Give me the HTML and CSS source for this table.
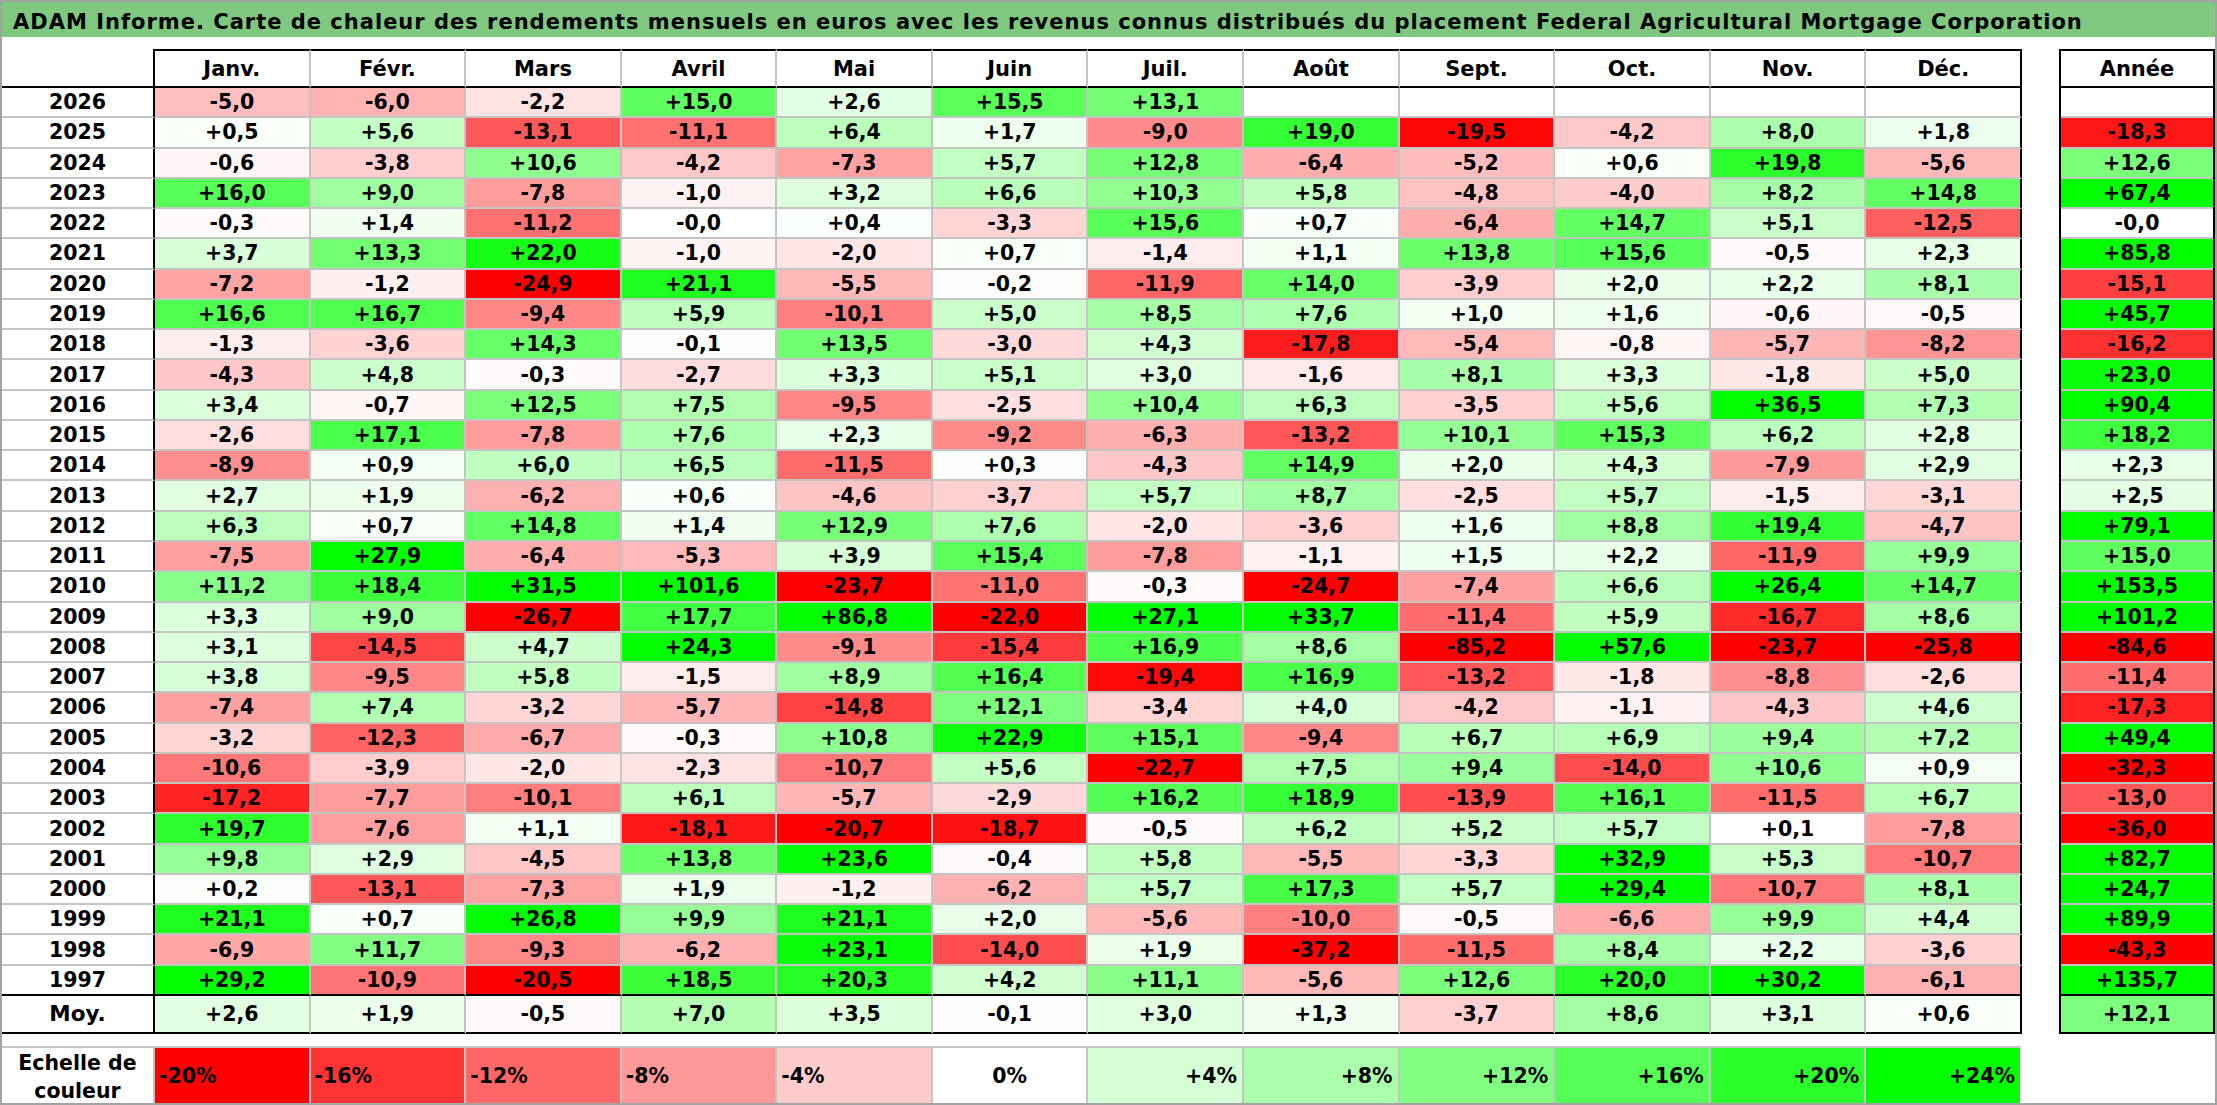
FILE: index.html
```html
<!DOCTYPE html>
<html lang="fr">
<head>
<meta charset="utf-8">
<title>ADAM Informe</title>
<link rel="stylesheet" href="styles.css">
</head>
<body>
<div class="page">
  <div class="title">ADAM Informe. Carte de chaleur des rendements mensuels en euros avec les revenus connus distribués du placement Federal Agricultural Mortgage Corporation</div>
  <div class="main">
    <div class="heat">
      <div class="row head-row">
        <div class="cell label"></div>
        <div class="cell">Janv.</div>
        <div class="cell">Févr.</div>
        <div class="cell">Mars</div>
        <div class="cell">Avril</div>
        <div class="cell">Mai</div>
        <div class="cell">Juin</div>
        <div class="cell">Juil.</div>
        <div class="cell">Août</div>
        <div class="cell">Sept.</div>
        <div class="cell">Oct.</div>
        <div class="cell">Nov.</div>
        <div class="cell">Déc.</div>
      </div>
      <div class="rows" id="rows"></div>
      <div class="row moy-row" id="moy"></div>
    </div>
    <div class="annee">
      <div class="a-cell a-head">Année</div>
      <div class="a-rows" id="arows"></div>
      <div class="a-cell a-moy" id="amoy"></div>
    </div>
  </div>
  <div class="row scale">
    <div class="cell label scale-label">Echelle de<br>couleur</div>
    <div class="cell neg s-20">-20%</div>
    <div class="cell neg s-16">-16%</div>
    <div class="cell neg s-12">-12%</div>
    <div class="cell neg s-8">-8%</div>
    <div class="cell neg s-4">-4%</div>
    <div class="cell s0">0%</div>
    <div class="cell pos s4">+4%</div>
    <div class="cell pos s8">+8%</div>
    <div class="cell pos s12">+12%</div>
    <div class="cell pos s16">+16%</div>
    <div class="cell pos s20">+20%</div>
    <div class="cell pos s24">+24%</div>
  </div>
</div>
<script src="script.js"></script>
</body>
</html>
```

FILE: styles.css
```css
* { box-sizing: border-box; }

body {
  margin: 0;
  background: #ffffff;
  font-family: "DejaVu Sans", "Liberation Sans", sans-serif;
  font-weight: bold;
  color: #000000;
}

.page {
  width: 2217px;
  height: 1105px;
  border: 2px solid #a3a3a3;
  overflow: hidden;
}

.title {
  height: 35px;
  background: #7fc87f;
  font-size: 21px;
  letter-spacing: 1px;
  line-height: 29px;
  padding: 6px 0 0 11px;
  white-space: nowrap;
}

.main {
  display: flex;
  margin-top: 12px;
  margin-left: -2px;
}

.heat { width: 2022px; }

.row {
  display: grid;
  grid-template-columns: 155px repeat(12, 1fr);
}

.cell {
  display: flex;
  align-items: center;
  justify-content: center;
  font-size: 20.5px;
  white-space: nowrap;
  border-right: 2px solid #c4c4c4;
  border-bottom: 2px solid #c4c4c4;
  background: #ffffff;
}

.row .cell:last-child { border-right-color: #000000; }

.label {
  border-left: 2px solid #000000;
  border-right: 2px solid #000000;
}

/* header */
.head-row { height: 39px; }
.head-row .cell {
  font-size: 21px;
  border-top: 2px solid #000000;
  border-bottom: 2px solid #000000;
}
.head-row .label {
  border-top: none;
  border-left-color: #a3a3a3;
}

/* data rows */
.data-row { height: 30.27px; }
.data-row.last .cell { border-bottom-color: #000000; }

/* average row */
.moy-row { height: 38px; }
.moy-row .cell { border-bottom-color: #000000; }
.moy-row .label { font-size: 21.5px; }

/* year column */
.annee {
  width: 156px;
  margin-left: 37px;
  border: 2px solid #000000;
  display: flex;
  flex-direction: column;
}
.a-cell {
  display: flex;
  align-items: center;
  justify-content: center;
  font-size: 20.5px;
  border-bottom: 2px solid #c4c4c4;
  background: #ffffff;
}
.a-head { height: 37px; font-size: 21px; border-bottom-color: #000000; }
.a-rows .a-cell { height: 30.27px; }
.a-rows .a-cell.last { border-bottom-color: #000000; }
.a-moy { height: 36px; border-bottom: none; }

/* colour scale */
.scale {
  width: 2022px;
  height: 57px;
  margin-top: 12px;
  margin-left: -2px;
}
.scale .cell {
  border-top: 2px solid #c4c4c4;
  border-bottom: none;
  border-right-color: #c4c4c4;
}
.scale .cell:last-child { border-right-color: #ffffff; }
.scale .label {
  border-left-color: #a3a3a3;
  border-right-color: #c4c4c4;
}
.scale-label {
  line-height: 28px;
  text-align: center;
  display: block;
  padding-top: 1px;
}
.scale .neg { justify-content: flex-start; padding-left: 4px; }
.scale .pos { justify-content: flex-end; padding-right: 5px; }

.s-20 { background: #ff0000; }
.s-16 { background: #ff3333; }
.s-12 { background: #ff6666; }
.s-8 { background: #ff9999; }
.s-4 { background: #ffcccc; }
.s0 { background: #ffffff; }
.s4 { background: #d4ffd4; }
.s8 { background: #aaffaa; }
.s12 { background: #80ff80; }
.s16 { background: #55ff55; }
.s20 { background: #2bff2b; }
.s24 { background: #00ff00; }
```

FILE: script.js
```js
var DATA = [
"2026 -5,0 -6,0 -2,2 +15,0 +2,6 +15,5 +13,1 _ _ _ _ _ _",
"2025 +0,5 +5,6 -13,1 -11,1 +6,4 +1,7 -9,0 +19,0 -19,5 -4,2 +8,0 +1,8 -18,3",
"2024 -0,6 -3,8 +10,6 -4,2 -7,3 +5,7 +12,8 -6,4 -5,2 +0,6 +19,8 -5,6 +12,6",
"2023 +16,0 +9,0 -7,8 -1,0 +3,2 +6,6 +10,3 +5,8 -4,8 -4,0 +8,2 +14,8 +67,4",
"2022 -0,3 +1,4 -11,2 -0,0 +0,4 -3,3 +15,6 +0,7 -6,4 +14,7 +5,1 -12,5 -0,0",
"2021 +3,7 +13,3 +22,0 -1,0 -2,0 +0,7 -1,4 +1,1 +13,8 +15,6 -0,5 +2,3 +85,8",
"2020 -7,2 -1,2 -24,9 +21,1 -5,5 -0,2 -11,9 +14,0 -3,9 +2,0 +2,2 +8,1 -15,1",
"2019 +16,6 +16,7 -9,4 +5,9 -10,1 +5,0 +8,5 +7,6 +1,0 +1,6 -0,6 -0,5 +45,7",
"2018 -1,3 -3,6 +14,3 -0,1 +13,5 -3,0 +4,3 -17,8 -5,4 -0,8 -5,7 -8,2 -16,2",
"2017 -4,3 +4,8 -0,3 -2,7 +3,3 +5,1 +3,0 -1,6 +8,1 +3,3 -1,8 +5,0 +23,0",
"2016 +3,4 -0,7 +12,5 +7,5 -9,5 -2,5 +10,4 +6,3 -3,5 +5,6 +36,5 +7,3 +90,4",
"2015 -2,6 +17,1 -7,8 +7,6 +2,3 -9,2 -6,3 -13,2 +10,1 +15,3 +6,2 +2,8 +18,2",
"2014 -8,9 +0,9 +6,0 +6,5 -11,5 +0,3 -4,3 +14,9 +2,0 +4,3 -7,9 +2,9 +2,3",
"2013 +2,7 +1,9 -6,2 +0,6 -4,6 -3,7 +5,7 +8,7 -2,5 +5,7 -1,5 -3,1 +2,5",
"2012 +6,3 +0,7 +14,8 +1,4 +12,9 +7,6 -2,0 -3,6 +1,6 +8,8 +19,4 -4,7 +79,1",
"2011 -7,5 +27,9 -6,4 -5,3 +3,9 +15,4 -7,8 -1,1 +1,5 +2,2 -11,9 +9,9 +15,0",
"2010 +11,2 +18,4 +31,5 +101,6 -23,7 -11,0 -0,3 -24,7 -7,4 +6,6 +26,4 +14,7 +153,5",
"2009 +3,3 +9,0 -26,7 +17,7 +86,8 -22,0 +27,1 +33,7 -11,4 +5,9 -16,7 +8,6 +101,2",
"2008 +3,1 -14,5 +4,7 +24,3 -9,1 -15,4 +16,9 +8,6 -85,2 +57,6 -23,7 -25,8 -84,6",
"2007 +3,8 -9,5 +5,8 -1,5 +8,9 +16,4 -19,4 +16,9 -13,2 -1,8 -8,8 -2,6 -11,4",
"2006 -7,4 +7,4 -3,2 -5,7 -14,8 +12,1 -3,4 +4,0 -4,2 -1,1 -4,3 +4,6 -17,3",
"2005 -3,2 -12,3 -6,7 -0,3 +10,8 +22,9 +15,1 -9,4 +6,7 +6,9 +9,4 +7,2 +49,4",
"2004 -10,6 -3,9 -2,0 -2,3 -10,7 +5,6 -22,7 +7,5 +9,4 -14,0 +10,6 +0,9 -32,3",
"2003 -17,2 -7,7 -10,1 +6,1 -5,7 -2,9 +16,2 +18,9 -13,9 +16,1 -11,5 +6,7 -13,0",
"2002 +19,7 -7,6 +1,1 -18,1 -20,7 -18,7 -0,5 +6,2 +5,2 +5,7 +0,1 -7,8 -36,0",
"2001 +9,8 +2,9 -4,5 +13,8 +23,6 -0,4 +5,8 -5,5 -3,3 +32,9 +5,3 -10,7 +82,7",
"2000 +0,2 -13,1 -7,3 +1,9 -1,2 -6,2 +5,7 +17,3 +5,7 +29,4 -10,7 +8,1 +24,7",
"1999 +21,1 +0,7 +26,8 +9,9 +21,1 +2,0 -5,6 -10,0 -0,5 -6,6 +9,9 +4,4 +89,9",
"1998 -6,9 +11,7 -9,3 -6,2 +23,1 -14,0 +1,9 -37,2 -11,5 +8,4 +2,2 -3,6 -43,3",
"1997 +29,2 -10,9 -20,5 +18,5 +20,3 +4,2 +11,1 -5,6 +12,6 +20,0 +30,2 -6,1 +135,7"
];
var MOY = "Moy. +2,6 +1,9 -0,5 +7,0 +3,5 -0,1 +3,0 +1,3 -3,7 +8,6 +3,1 +0,6 +12,1";

function colour(txt) {
  if (txt === "_") return "#ffffff";
  var v = parseFloat(txt.replace(",", "."));
  var c;
  if (v >= 0) {
    c = Math.round(255 * (1 - Math.min(v, 24) / 24));
    return "rgb(" + c + ",255," + c + ")";
  }
  c = Math.round(255 * (1 - Math.min(-v, 20) / 20));
  return "rgb(255," + c + "," + c + ")";
}

function cell(cls, txt) {
  var d = document.createElement("div");
  d.className = cls;
  if (txt !== "_") d.textContent = txt;
  return d;
}

var rows = document.getElementById("rows");
var arows = document.getElementById("arows");

DATA.forEach(function (line, i) {
  var t = line.split(" ");
  var last = i === DATA.length - 1;
  var r = document.createElement("div");
  r.className = "row data-row" + (last ? " last" : "");
  r.appendChild(cell("cell label", t[0]));
  for (var m = 1; m <= 12; m++) {
    var c = cell("cell", t[m]);
    c.style.background = colour(t[m]);
    r.appendChild(c);
  }
  rows.appendChild(r);
  var a = cell("a-cell" + (last ? " last" : ""), t[13]);
  a.style.background = colour(t[13]);
  arows.appendChild(a);
});

var mt = MOY.split(" ");
var moy = document.getElementById("moy");
moy.appendChild(cell("cell label", mt[0]));
for (var m = 1; m <= 12; m++) {
  var c = cell("cell", mt[m]);
  c.style.background = colour(mt[m]);
  moy.appendChild(c);
}
var amoy = document.getElementById("amoy");
amoy.textContent = mt[13];
amoy.style.background = colour(mt[13]);
```
